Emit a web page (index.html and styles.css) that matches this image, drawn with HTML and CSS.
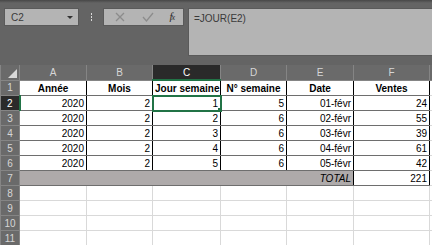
FILE: index.html
```html
<!DOCTYPE html>
<html>
<head>
  <link rel="stylesheet" href="styles.css">
</head>
<body>
  <div class="formula-bar">
    <div class="name-box">
      <span>C2</span>
      <span class="arrow"></span>
    </div>
    <div class="grip"><span></span><span></span><span></span></div>
    <div class="buttons">
      <svg class="btn" width="14" height="14" viewBox="0 0 14 14">
        <path d="M3 3 L11 11 M11 3 L3 11" stroke="#8c8c8c" stroke-width="1.3" fill="none"/>
      </svg>
      <svg class="btn" width="14" height="14" viewBox="0 0 14 14">
        <path d="M2 7 L5.5 11 L12 3" stroke="#8c8c8c" stroke-width="1.3" fill="none"/>
      </svg>
      <span class="fx">f<span class="fx-x">x</span></span>
    </div>
    <div class="formula">=JOUR(E2)</div>
  </div>

  <table class="sheet">
    <colgroup>
      <col class="c-rh">
      <col class="c-a">
      <col class="c-b">
      <col class="c-c">
      <col class="c-d">
      <col class="c-e">
      <col class="c-f">
      <col class="c-g">
    </colgroup>
    <thead>
      <tr>
        <th class="corner"><span class="tri"></span></th>
        <th>A</th>
        <th>B</th>
        <th class="sel-col">C</th>
        <th>D</th>
        <th>E</th>
        <th>F</th>
        <th></th>
      </tr>
    </thead>
    <tbody>
      <tr class="data head">
        <th class="rh">1</th>
        <td>Année</td>
        <td>Mois</td>
        <td>Jour semaine</td>
        <td>N° semaine</td>
        <td>Date</td>
        <td>Ventes</td>
        <td class="grid"></td>
      </tr>
      <tr class="data">
        <th class="rh sel-row">2</th>
        <td>2020</td>
        <td>2</td>
        <td class="active">1<span class="handle"></span></td>
        <td>5</td>
        <td>01-févr</td>
        <td>24</td>
        <td class="grid"></td>
      </tr>
      <tr class="data">
        <th class="rh">3</th>
        <td>2020</td>
        <td>2</td>
        <td>2</td>
        <td>6</td>
        <td>02-févr</td>
        <td>55</td>
        <td class="grid"></td>
      </tr>
      <tr class="data">
        <th class="rh">4</th>
        <td>2020</td>
        <td>2</td>
        <td>3</td>
        <td>6</td>
        <td>03-févr</td>
        <td>39</td>
        <td class="grid"></td>
      </tr>
      <tr class="data">
        <th class="rh">5</th>
        <td>2020</td>
        <td>2</td>
        <td>4</td>
        <td>6</td>
        <td>04-févr</td>
        <td>61</td>
        <td class="grid"></td>
      </tr>
      <tr class="data">
        <th class="rh">6</th>
        <td>2020</td>
        <td>2</td>
        <td>5</td>
        <td>6</td>
        <td>05-févr</td>
        <td>42</td>
        <td class="grid"></td>
      </tr>
      <tr class="data">
        <th class="rh">7</th>
        <td colspan="5" class="total">TOTAL</td>
        <td>221</td>
        <td class="grid"></td>
      </tr>
      <tr>
        <th class="rh">8</th>
        <td class="grid"></td><td class="grid"></td><td class="grid"></td><td class="grid"></td><td class="grid"></td><td class="grid"></td><td class="grid"></td>
      </tr>
      <tr>
        <th class="rh">9</th>
        <td class="grid"></td><td class="grid"></td><td class="grid"></td><td class="grid"></td><td class="grid"></td><td class="grid"></td><td class="grid"></td>
      </tr>
      <tr>
        <th class="rh">10</th>
        <td class="grid"></td><td class="grid"></td><td class="grid"></td><td class="grid"></td><td class="grid"></td><td class="grid"></td><td class="grid"></td>
      </tr>
      <tr>
        <th class="rh">11</th>
        <td class="grid"></td><td class="grid"></td><td class="grid"></td><td class="grid"></td><td class="grid"></td><td class="grid"></td><td class="grid"></td>
      </tr>
    </tbody>
  </table>
</body>
</html>
```

FILE: styles.css
```css
body {
  margin: 0;
  width: 432px;
  height: 245px;
  overflow: hidden;
  background-color: #ffffff;
  font-family: 'Liberation Sans', Arial, sans-serif;
  font-size: 10px;
}

.formula-bar {
  display: flex;
  align-items: flex-start;
  height: 65px;
  box-sizing: border-box;
  padding-top: 8px;
  background: linear-gradient(#474747, #646464 3px, #646464);
}

.name-box {
  display: flex;
  align-items: center;
  justify-content: space-between;
  margin-left: 4px;
  width: 75px;
  height: 18px;
  box-sizing: border-box;
  padding: 0 5px 0 6px;
  background-color: #b4b4b4;
  border: 1px solid #5a5a5a;
  color: #3a3a3a;
  font-size: 10px;
}

.arrow {
  width: 0;
  height: 0;
  border-left: 3px solid transparent;
  border-right: 3px solid transparent;
  border-top: 3px solid #333;
}

.grip {
  width: 24px;
  height: 18px;
  display: flex;
  flex-direction: column;
  align-items: center;
  justify-content: center;
  gap: 1px;
}

.grip span {
  width: 1px;
  height: 2px;
  background-color: #d8d8d8;
}

.buttons {
  display: flex;
  align-items: center;
  justify-content: space-between;
  width: 81px;
  height: 18px;
  box-sizing: border-box;
  padding: 0 9px 0 9px;
  background-color: #b4b4b4;
  border: 1px solid #5a5a5a;
}

.fx {
  font-family: 'Liberation Serif', serif;
  font-style: italic;
  font-size: 11px;
  color: #2a2a2a;
  line-height: 11px;
  letter-spacing: -1px;
}

.fx-x {
  font-size: 8px;
}

.formula {
  flex: 1;
  margin-left: 4px;
  margin-right: -2px;
  height: 48px;
  box-sizing: border-box;
  padding: 4px 5px;
  background-color: #b4b4b4;
  border: 1px solid #5a5a5a;
  color: #3a3a3a;
  font-size: 10px;
}

.sheet {
  table-layout: fixed;
  width: 440px;
  border-collapse: collapse;
}

.c-rh { width: 19px; }
.c-a { width: 67px; }
.c-b { width: 66px; }
.c-c { width: 68px; }
.c-d { width: 66px; }
.c-e { width: 67px; }
.c-f { width: 76px; }
.c-g { width: 11px; }

.sheet tr {
  height: 15px;
}

.sheet th {
  padding: 0;
  background-color: #6a6a6a;
  color: #d6d6d6;
  font-weight: normal;
  font-size: 10px;
  text-align: center;
  border: 1px solid #858585;
  height: 14px;
  line-height: 13px;
}

.sheet thead th {
  border-top: none;
}

.corner {
  position: relative;
}

.tri {
  position: absolute;
  right: 2px;
  bottom: 2px;
  width: 0;
  height: 0;
  border-left: 9px solid transparent;
  border-bottom: 9px solid #d8d8d8;
}

.sheet th.sel-col {
  background-color: #2a2a2a;
  color: #ffffff;
  border-bottom: 2px solid #217346;
}

.sheet th.sel-row {
  background-color: #2a2a2a;
  color: #ffffff;
  border-right: 2px solid #217346;
}

.rh {
  border-left: none;
}

.sheet td {
  padding: 0 2px;
  height: 14px;
  line-height: 13px;
  vertical-align: bottom;
  white-space: nowrap;
  overflow: hidden;
  color: #000;
  font-size: 10px;
}

.data td {
  text-align: right;
  border-top: 1px solid #6e6e6e;
  border-bottom: 1px solid #6e6e6e;
  border-left: 1px solid #000;
  border-right: 1px solid #000;
}

.head td {
  text-align: center;
  font-weight: bold;
}

.sheet td.grid {
  border: 1px solid #d9d9d9;
}

.total {
  background-color: #aeaaaa;
  font-style: italic;
}

.active {
  position: relative;
  outline: 2px solid #217346;
  outline-offset: -1px;
}

.handle {
  position: absolute;
  right: -3px;
  bottom: -3px;
  width: 4px;
  height: 4px;
  background-color: #217346;
  border: 1px solid #ffffff;
}
```
